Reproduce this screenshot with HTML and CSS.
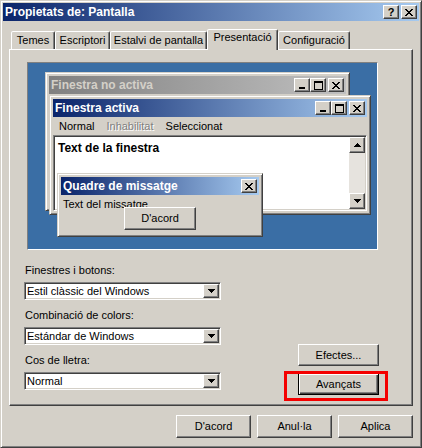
FILE: index.html
```html
<!DOCTYPE html>
<html lang="ca">
<head>
<meta charset="utf-8">
<title>Propietats de: Pantalla</title>
<link rel="stylesheet" href="styles.css">
</head>
<body>
<div class="dialog">
  <div class="titlebar">
    <span class="title">Propietats de: Pantalla</span>
    <div class="caption-btns">
      <span class="cbtn help">?</span>
      <span class="cbtn"><svg class="ico" width="8" height="7" viewBox="0 0 8 7"><path d="M0 0h2v1h-2z M6 0h2v1h-2z M1 1h2v1h-2z M5 1h2v1h-2z M2 2h4v1h-4z M3 3h2v1h-2z M2 4h4v1h-4z M1 5h2v1h-2z M5 5h2v1h-2z M0 6h2v1h-2z M6 6h2v1h-2z"/></svg></span>
    </div>
  </div>

  <div class="sheet">
    <div class="tabs">
      <div class="tab t-temes">Temes</div>
      <div class="tab t-escr">Escriptori</div>
      <div class="tab t-estalvi">Estalvi de pantalla</div>
      <div class="tab t-pres sel">Presentació</div>
      <div class="tab t-conf">Configuració</div>
    </div>
    <div class="panel">
      <div class="preview">
        <div class="win inactive">
          <div class="cap cap-inactive">
            <span class="cap-title">Finestra no activa</span>
            <span class="wbtn"><svg width="8" height="7" viewBox="0 0 8 7"><path d="M1 5h6v2h-6z"/></svg></span>
            <span class="wbtn"><svg width="9" height="9" viewBox="0 0 9 9"><path fill-rule="evenodd" d="M0 0h9v9h-9z M1 2h7v6h-7z"/></svg></span>
            <span class="wbtn gap"><svg width="8" height="7" viewBox="0 0 8 7"><path d="M0 0h2v1h-2z M6 0h2v1h-2z M1 1h2v1h-2z M5 1h2v1h-2z M2 2h4v1h-4z M3 3h2v1h-2z M2 4h4v1h-4z M1 5h2v1h-2z M5 5h2v1h-2z M0 6h2v1h-2z M6 6h2v1h-2z"/></svg></span>
          </div>
        </div>

        <div class="win active">
          <div class="cap cap-active">
            <span class="cap-title">Finestra activa</span>
            <span class="wbtn"><svg width="8" height="7" viewBox="0 0 8 7"><path d="M1 5h6v2h-6z"/></svg></span>
            <span class="wbtn"><svg width="9" height="9" viewBox="0 0 9 9"><path fill-rule="evenodd" d="M0 0h9v9h-9z M1 2h7v6h-7z"/></svg></span>
            <span class="wbtn gap"><svg width="8" height="7" viewBox="0 0 8 7"><path d="M0 0h2v1h-2z M6 0h2v1h-2z M1 1h2v1h-2z M5 1h2v1h-2z M2 2h4v1h-4z M3 3h2v1h-2z M2 4h4v1h-4z M1 5h2v1h-2z M5 5h2v1h-2z M0 6h2v1h-2z M6 6h2v1h-2z"/></svg></span>
          </div>
          <div class="menubar">
            <span class="mitem">Normal</span>
            <span class="mitem disabled">Inhabilitat</span>
            <span class="mitem">Seleccionat</span>
          </div>
          <div class="textarea">
            <div class="ta-text">Text de la finestra</div>
            <div class="scroll">
              <span class="sbtn"><svg width="7" height="4" viewBox="0 0 7 4"><path d="M3 0h1v1h1v1h1v1h1v1h-7v-1h1v-1h1v-1h1z"/></svg></span>
              <span class="sbtn"><svg width="7" height="4" viewBox="0 0 7 4"><path d="M0 0h7v1h-1v1h-1v1h-1v1h-1v-1h-1v-1h-1v-1h-1z"/></svg></span>
            </div>
          </div>
        </div>

        <div class="win msg">
          <div class="cap cap-active">
            <span class="cap-title">Quadre de missatge</span>
            <span class="wbtn"><svg width="8" height="7" viewBox="0 0 8 7"><path d="M0 0h2v1h-2z M6 0h2v1h-2z M1 1h2v1h-2z M5 1h2v1h-2z M2 2h4v1h-4z M3 3h2v1h-2z M2 4h4v1h-4z M1 5h2v1h-2z M5 5h2v1h-2z M0 6h2v1h-2z M6 6h2v1h-2z"/></svg></span>
          </div>
          <div class="msg-body">
            <div class="msg-text">Text del missatge</div>
            <div class="btn msg-btn">D'acord</div>
          </div>
        </div>
      </div>

      <div class="controls">
        <div class="fields">
          <div class="lbl">Finestres i botons:</div>
          <div class="combo"><span class="combo-text">Estil clàssic del Windows</span><span class="combo-btn"><svg width="7" height="4" viewBox="0 0 7 4"><path d="M0 0h7v1h-1v1h-1v1h-1v1h-1v-1h-1v-1h-1v-1h-1z"/></svg></span></div>
          <div class="lbl">Combinació de colors:</div>
          <div class="combo"><span class="combo-text">Estándar de Windows</span><span class="combo-btn"><svg width="7" height="4" viewBox="0 0 7 4"><path d="M0 0h7v1h-1v1h-1v1h-1v1h-1v-1h-1v-1h-1v-1h-1z"/></svg></span></div>
          <div class="lbl">Cos de lletra:</div>
          <div class="combo"><span class="combo-text">Normal</span><span class="combo-btn"><svg width="7" height="4" viewBox="0 0 7 4"><path d="M0 0h7v1h-1v1h-1v1h-1v1h-1v-1h-1v-1h-1v-1h-1z"/></svg></span></div>
        </div>
        <div class="side">
          <div class="btn side-btn">Efectes...</div>
          <div class="adv-wrap">
            <div class="btn side-btn default">Avançats</div>
            <span class="redbox"></span>
          </div>
        </div>
      </div>
    </div>
  </div>

  <div class="footer">
    <div class="btn foot-btn">D'acord</div>
    <div class="btn foot-btn">Anul·la</div>
    <div class="btn foot-btn">Aplica</div>
  </div>
</div>
</body>
</html>
```

FILE: styles.css
```css
* { box-sizing: border-box; }
html, body { margin: 0; padding: 0; }
body {
  width: 422px;
  height: 448px;
  overflow: hidden;
  background: #d4d0c8;
  font-family: "Liberation Sans", Arial, sans-serif;
  font-size: 11px;
  color: #000;
}

.dialog {
  width: 422px;
  height: 448px;
  background: #d4d0c8;
  border: 1px solid;
  border-color: #d4d0c8 #404040 #404040 #d4d0c8;
  box-shadow: inset 1px 1px #fff, inset -1px -1px #808080;
  padding: 2px;
  display: flex;
  flex-direction: column;
}

/* title bar */
.titlebar {
  flex: none;
  height: 18px;
  display: flex;
  align-items: center;
  justify-content: space-between;
  padding: 0 2px;
  background: linear-gradient(to right, #0a246a, #a6caf0);
}
.title {
  color: #fff;
  font-weight: bold;
  font-size: 12px;
  line-height: 14px;
  white-space: nowrap;
}
.caption-btns { display: flex; gap: 2px; }
.cbtn, .wbtn, .sbtn, .combo-btn {
  width: 16px;
  height: 14px;
  background: #d4d0c8;
  border: 1px solid;
  border-color: #fff #404040 #404040 #fff;
  box-shadow: inset -1px -1px #808080;
  display: flex;
  align-items: center;
  justify-content: center;
  flex: none;
}
.cbtn svg, .wbtn svg, .sbtn svg, .combo-btn svg { fill: #000; display: block; }
.help {
  font-weight: bold;
  font-size: 11px;
  line-height: 12px;
  padding-bottom: 1px;
}

/* tabs */
.sheet { margin: 8px 6px 0; flex: none; }
.tabs {
  display: flex;
  align-items: flex-end;
  height: 20px;
  padding-left: 2px;
  position: relative;
  z-index: 1;
}
.tab {
  height: 18px;
  border: 1px solid;
  border-bottom: none;
  border-color: #fff #404040 transparent #fff;
  box-shadow: inset -1px 0 #808080;
  border-radius: 2px 2px 0 0;
  background: #d4d0c8;
  text-align: center;
  line-height: 14px;
  padding-top: 1px;
  white-space: nowrap;
}
.tab.sel {
  height: 21px;
  margin-bottom: -1px;
  padding-top: 0;
}
.t-temes { width: 44px; }
.t-escr { width: 55px; }
.t-estalvi { width: 97px; }
.t-pres { width: 71px; }
.t-conf { width: 72px; }

.panel {
  height: 357px;
  border: 1px solid;
  border-color: #fff #404040 #404040 #fff;
  box-shadow: inset -1px -1px #808080;
  background: #d4d0c8;
}

/* preview */
.preview {
  position: relative;
  width: 351px;
  height: 188px;
  margin: 12px 0 0 17px;
  border: 1px solid;
  border-color: #808080 #fff #fff #808080;
  background: #3a6ea5;
}
.win {
  position: absolute;
  background: #d4d0c8;
  border: 1px solid;
  border-color: #d4d0c8 #404040 #404040 #d4d0c8;
  box-shadow: inset 1px 1px #fff, inset -1px -1px #808080;
  padding: 3px;
  display: flex;
  flex-direction: column;
}
.inactive { left: 17px; top: 9px; width: 305px; height: 139px; }
.active { left: 21px; top: 32px; width: 322px; height: 120px; }
.msg { left: 29px; top: 110px; width: 206px; height: 64px; }

.cap {
  flex: none;
  height: 18px;
  display: flex;
  align-items: center;
  padding: 0 2px;
}
.cap-active { background: linear-gradient(to right, #0a246a, #a6caf0); color: #fff; }
.cap-inactive { background: linear-gradient(to right, #808080, #c0c0c0); color: #d4d0c8; }
.cap-title {
  flex: 1;
  font-weight: bold;
  font-size: 12px;
  line-height: 14px;
  white-space: nowrap;
  overflow: hidden;
}
.wbtn.gap { margin-left: 2px; }

.menubar {
  flex: none;
  height: 18px;
  display: flex;
  align-items: center;
  line-height: 13px;
}
.mitem { padding: 0 6px; }
.mitem.disabled { color: #808080; text-shadow: 1px 1px 0 #fff; }

.textarea {
  flex: 1;
  display: flex;
  border: 1px solid;
  border-color: #808080 #fff #fff #808080;
  box-shadow: inset 1px 1px #404040, inset -1px -1px #d4d0c8;
  background: #fff;
  padding: 1px;
}
.ta-text {
  flex: 1;
  padding: 4px 2px 0 3px;
  font-weight: bold;
  font-size: 12px;
  line-height: 14px;
}
.scroll {
  width: 16px;
  display: flex;
  flex-direction: column;
  justify-content: space-between;
  background: #e6e3de;
}
.sbtn { height: 16px; }

.msg-body {
  flex: 1;
  display: flex;
  flex-direction: column;
  align-items: center;
  padding: 3px 2px 0;
}
.msg-text { align-self: flex-start; line-height: 13px; white-space: nowrap; }
.msg-btn { width: 72px; height: 23px; margin-top: -4px; position: relative; }

/* buttons */
.btn {
  display: flex;
  align-items: center;
  justify-content: center;
  background: #d4d0c8;
  border: 1px solid;
  border-color: #fff #404040 #404040 #fff;
  box-shadow: inset -1px -1px #808080;
  line-height: 13px;
  white-space: nowrap;
}

/* controls */
.controls {
  display: flex;
  align-items: flex-start;
  margin-top: 14px;
  padding-left: 14px;
}
.fields { width: 197px; }
.lbl {
  line-height: 13px;
  padding-left: 1px;
  margin-bottom: 5px;
  white-space: nowrap;
}
.combo {
  height: 18px;
  display: flex;
  align-items: center;
  border: 1px solid;
  border-color: #808080 #fff #fff #808080;
  box-shadow: inset 1px 1px #404040, inset -1px -1px #d4d0c8;
  background: #fff;
  padding: 1px;
  margin-bottom: 9px;
}
.combo:last-child { margin-bottom: 0; }
.combo-text { flex: 1; padding-left: 1px; line-height: 14px; white-space: nowrap; }

.side {
  margin-left: 77px;
  margin-top: 80px;
  display: flex;
  flex-direction: column;
  gap: 7px;
}
.side-btn { width: 81px; height: 22px; }
.side-btn.default {
  border-color: #000;
  box-shadow: inset 1px 1px #fff, inset -1px -1px #404040, inset -2px -2px #808080;
}
.adv-wrap { position: relative; }
.redbox {
  position: absolute;
  left: -14px;
  top: -2px;
  width: 104px;
  height: 30px;
  border: 3px solid #f40000;
}

/* footer */
.footer {
  display: flex;
  justify-content: flex-end;
  gap: 6px;
  margin-top: 9px;
  padding-right: 6px;
}
.foot-btn { width: 75px; height: 23px; }
```
